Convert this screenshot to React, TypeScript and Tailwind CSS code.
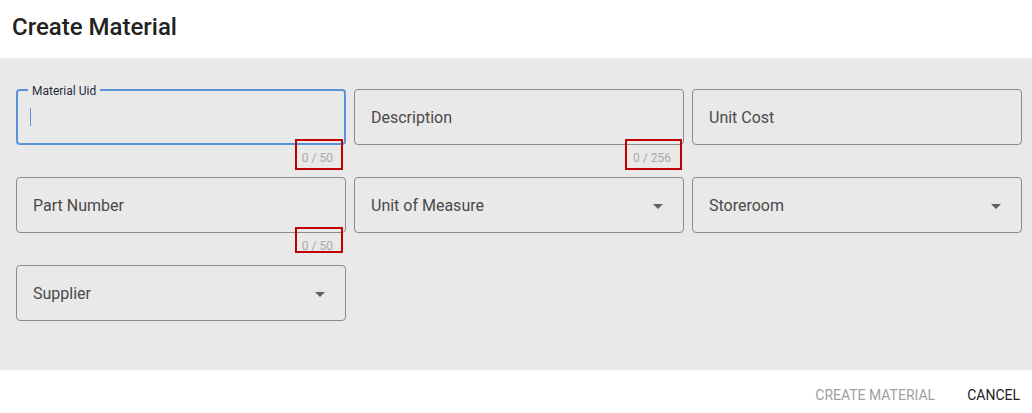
import React from "react";

type FieldProps = {
  label: string;
  focused?: boolean;
  counter?: string;
  select?: boolean;
  mark?: string;
};

function Field({ label, focused, counter, select, mark }: FieldProps) {
  return (
    <div className="relative flex flex-col">
      {focused ? (
        <div className="relative h-14 rounded-[4px] border-2 border-[#5b93d9]">
          <span className="absolute -top-[8px] left-[10px] bg-[#e9e9e9] px-[4px] text-[12px] leading-[16px] text-[#2b2b3b]">
            {label}
          </span>
          <span className="absolute left-[12px] top-[17px] h-[18px] w-px bg-[#5b93d9]" />
        </div>
      ) : (
        <div className="flex h-14 items-center justify-between rounded-[4px] border border-[#8c8c8c] pl-4 pr-[20px] pt-[2px]">
          <span className="text-[16px] text-[#4a4a4a]">{label}</span>
          {select && (
            <svg width="10" height="5" viewBox="0 0 10 5" className="text-[#5f5f5f]">
              <path d="M0 0h10L5 5z" fill="currentColor" />
            </svg>
          )}
        </div>
      )}
      <div className="flex h-6 items-center justify-end pr-[13px] pt-px text-[12px] text-[#a8a8a8]">
        {counter}
      </div>
      {mark && (
        <div
          className={
            mark === "wide"
              ? "pointer-events-none absolute right-[2px] top-[50px] h-[31px] w-[57px] border-2 border-[#c00000]"
              : mark === "short"
              ? "pointer-events-none absolute right-[3px] top-[50px] h-[26px] w-[48px] border-2 border-[#c00000]"
              : "pointer-events-none absolute right-[3px] top-[50px] h-[31px] w-[48px] border-2 border-[#c00000]"
          }
        />
      )}
    </div>
  );
}

export default function App() {
  return (
    <div className="flex h-[413px] w-[1032px] flex-col bg-white font-['Roboto','Liberation_Sans',sans-serif]">
      <div className="flex h-[58px] items-center pl-3 pb-1">
        <h1 className="text-[24px] font-medium text-[#222]">Create Material</h1>
      </div>
      <div className="h-[312px] bg-[#e9e9e9] pl-4 pr-[10px] pt-[31px]">
        <div className="grid grid-cols-3 gap-x-2 gap-y-2">
          <Field label="Material Uid" focused counter="0 / 50" mark="tall" />
          <Field label="Description" counter="0 / 256" mark="wide" />
          <Field label="Unit Cost" />
          <Field label="Part Number" counter="0 / 50" mark="short" />
          <Field label="Unit of Measure" select />
          <Field label="Storeroom" select />
          <Field label="Supplier" select />
        </div>
      </div>
      <div className="flex flex-1 items-center justify-end gap-8 pr-3 pt-[7px] text-[14px]">
        <span className="text-[#a0a0a0]">CREATE MATERIAL</span>
        <span className="text-[#222]">CANCEL</span>
      </div>
    </div>
  );
}
